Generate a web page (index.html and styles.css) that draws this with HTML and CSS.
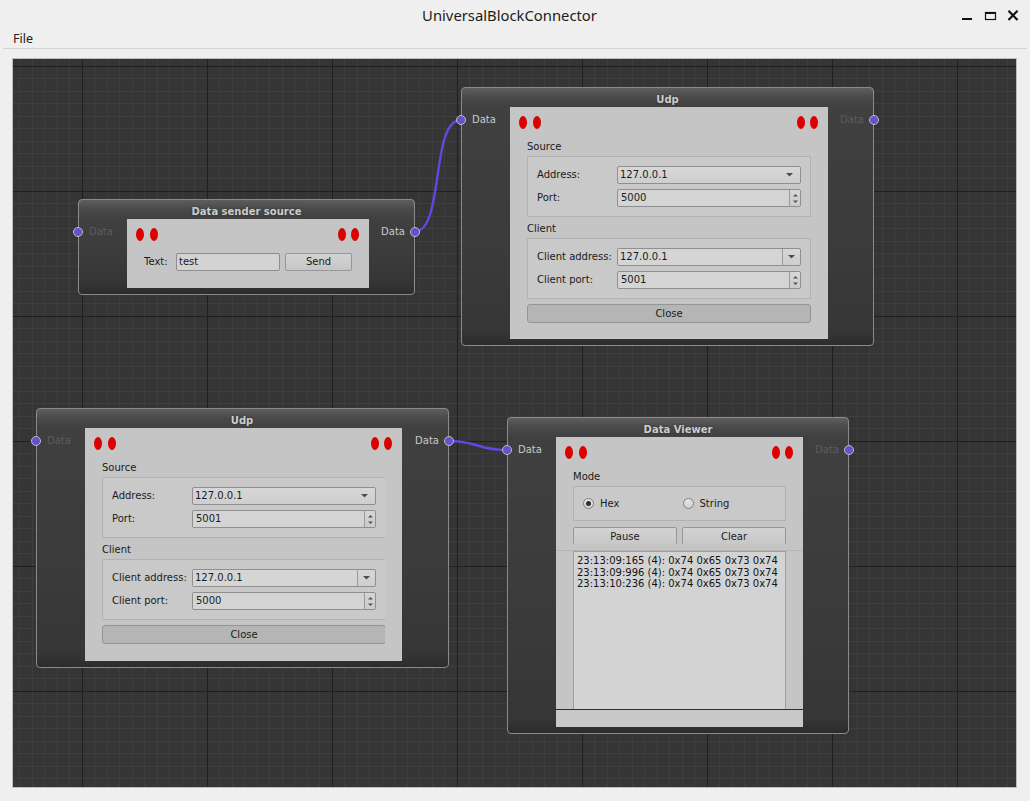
FILE: index.html
```html
<!DOCTYPE html>
<html>
<head>
<meta charset="utf-8">
<title>UniversalBlockConnector</title>
<link rel="stylesheet" href="styles.css">
</head>
<body>
<div class="window">
  <header class="titlebar">
    <span class="title">UniversalBlockConnector</span>
    <svg class="controls" width="57" height="11" viewBox="0 0 57 11">
      <rect x="0" y="8" width="10" height="2" fill="#111"/>
      <rect x="23.5" y="2.5" width="10" height="7" fill="none" stroke="#111" stroke-width="1.2"/>
      <rect x="23" y="2" width="11" height="2" fill="#111"/>
      <path d="M46.5 0.8 L55.5 10 M55.5 0.8 L46.5 10" stroke="#111" stroke-width="2.2"/>
    </svg>
  </header>
  <nav class="menubar"><span>File</span></nav>
  <div class="sep"></div>
  <main class="workspace">
    <div class="canvas">
      <svg class="layer" width="1003" height="728">
        <defs>
          <pattern id="grid" patternUnits="userSpaceOnUse" x="69" y="7" width="125" height="125">
            <rect width="125" height="125" fill="#353535"/>
            <g fill="#3e3e3e">
              <rect x="12" y="0" width="1" height="125"/>
              <rect x="25" y="0" width="1" height="125"/>
              <rect x="37" y="0" width="1" height="125"/>
              <rect x="50" y="0" width="1" height="125"/>
              <rect x="62" y="0" width="1" height="125"/>
              <rect x="75" y="0" width="1" height="125"/>
              <rect x="87" y="0" width="1" height="125"/>
              <rect x="100" y="0" width="1" height="125"/>
              <rect x="112" y="0" width="1" height="125"/>
              <rect y="12" x="0" height="1" width="125"/>
              <rect y="25" x="0" height="1" width="125"/>
              <rect y="37" x="0" height="1" width="125"/>
              <rect y="50" x="0" height="1" width="125"/>
              <rect y="62" x="0" height="1" width="125"/>
              <rect y="75" x="0" height="1" width="125"/>
              <rect y="87" x="0" height="1" width="125"/>
              <rect y="100" x="0" height="1" width="125"/>
              <rect y="112" x="0" height="1" width="125"/>
            </g>
            <g fill="#1f1f1f">
              <rect x="0" y="0" width="1" height="125"/>
              <rect x="0" y="0" width="125" height="1"/>
            </g>
          </pattern>
        </defs>
        <rect width="1003" height="728" fill="url(#grid)"/>
        <path class="wire" d="M401 173 C 432 173, 417 61, 448 61"/>
        <path class="wire" d="M435 382 C 466 382, 463 391, 494 391"/>
      </svg>

      <section class="node node-sender">
        <div class="node-title">Data sender source</div>
        <span class="port port-in"></span><span class="port-label label-in dim">Data</span>
        <span class="port port-out"></span><span class="port-label label-out">Data</span>
        <div class="panel panel-sender">
          <div class="leds"><span class="pair"><i class="led"></i><i class="led"></i></span><span class="pair"><i class="led"></i><i class="led"></i></span></div>
          <div class="sender-row">
            <span class="row-label">Text:</span>
            <span class="field">test</span>
            <span class="btn send">Send</span>
          </div>
        </div>
      </section>

      <section class="node node-udp-a">
        <div class="node-title">Udp</div>
        <span class="port port-in"></span><span class="port-label label-in">Data</span>
        <span class="port port-out"></span><span class="port-label label-out dim">Data</span>
        <div class="panel panel-udp-a">
          <div class="leds"><span class="pair"><i class="led"></i><i class="led"></i></span><span class="pair"><i class="led"></i><i class="led"></i></span></div>
          <div class="form">
            <div class="group-label">Source</div>
            <div class="group">
              <span>Address:</span>
              <div class="combo"><span>127.0.0.1</span><svg class="arrow" width="7" height="4" viewBox="0 0 7 4"><path d="M0 0H7L3.5 3.5Z"/></svg></div>
              <span>Port:</span>
              <div class="spin"><span class="val">5000</span><span class="spin-btns"><svg width="7" height="11" viewBox="0 0 7 11"><path d="M1 3.5L3.5 1L6 3.5Z M1 7.5L6 7.5L3.5 10Z"/></svg></span></div>
            </div>
            <div class="group-label">Client</div>
            <div class="group">
              <span>Client address:</span>
              <div class="combo editable"><span class="edit">127.0.0.1</span><span class="drop"><svg width="7" height="4" viewBox="0 0 7 4"><path d="M0 0H7L3.5 3.5Z"/></svg></span></div>
              <span>Client port:</span>
              <div class="spin"><span class="val">5001</span><span class="spin-btns"><svg width="7" height="11" viewBox="0 0 7 11"><path d="M1 3.5L3.5 1L6 3.5Z M1 7.5L6 7.5L3.5 10Z"/></svg></span></div>
            </div>
            <div class="btn close-btn">Close</div>
          </div>
        </div>
      </section>

      <section class="node node-udp-b">
        <div class="node-title">Udp</div>
        <span class="port port-in"></span><span class="port-label label-in dim">Data</span>
        <span class="port port-out"></span><span class="port-label label-out">Data</span>
        <div class="panel panel-udp-b">
          <div class="leds"><span class="pair"><i class="led"></i><i class="led"></i></span><span class="pair"><i class="led"></i><i class="led"></i></span></div>
          <div class="form">
            <div class="group-label">Source</div>
            <div class="group">
              <span>Address:</span>
              <div class="combo"><span>127.0.0.1</span><svg class="arrow" width="7" height="4" viewBox="0 0 7 4"><path d="M0 0H7L3.5 3.5Z"/></svg></div>
              <span>Port:</span>
              <div class="spin"><span class="val">5001</span><span class="spin-btns"><svg width="7" height="11" viewBox="0 0 7 11"><path d="M1 3.5L3.5 1L6 3.5Z M1 7.5L6 7.5L3.5 10Z"/></svg></span></div>
            </div>
            <div class="group-label">Client</div>
            <div class="group">
              <span>Client address:</span>
              <div class="combo editable"><span class="edit">127.0.0.1</span><span class="drop"><svg width="7" height="4" viewBox="0 0 7 4"><path d="M0 0H7L3.5 3.5Z"/></svg></span></div>
              <span>Client port:</span>
              <div class="spin"><span class="val">5000</span><span class="spin-btns"><svg width="7" height="11" viewBox="0 0 7 11"><path d="M1 3.5L3.5 1L6 3.5Z M1 7.5L6 7.5L3.5 10Z"/></svg></span></div>
            </div>
            <div class="btn close-btn">Close</div>
          </div>
        </div>
      </section>

      <section class="node node-viewer">
        <div class="node-title">Data Viewer</div>
        <span class="port port-in"></span><span class="port-label label-in">Data</span>
        <span class="port port-out"></span><span class="port-label label-out dim">Data</span>
        <div class="panel panel-viewer">
          <div class="leds"><span class="pair"><i class="led"></i><i class="led"></i></span><span class="pair"><i class="led"></i><i class="led"></i></span></div>
          <div class="viewer-top">
            <div class="group-label">Mode</div>
            <div class="mode-group">
              <label class="radio"><span class="radio-dot checked"></span>Hex</label>
              <label class="radio"><span class="radio-dot"></span>String</label>
            </div>
            <div class="viewer-buttons">
              <span class="btn">Pause</span>
              <span class="btn">Clear</span>
            </div>
          </div>
          <div class="splitter"></div>
          <div class="log-pane">
            <div class="log">
              <div>23:13:09:165 (4): 0x74 0x65 0x73 0x74</div>
              <div>23:13:09:996 (4): 0x74 0x65 0x73 0x74</div>
              <div>23:13:10:236 (4): 0x74 0x65 0x73 0x74</div>
            </div>
          </div>
          <div class="status"></div>
        </div>
      </section>
    </div>
  </main>
</div>
</body>
</html>
```

FILE: styles.css
```css
* { box-sizing: border-box; }
html, body { margin: 0; padding: 0; }
body {
  background: #efefef;
  font-family: "DejaVu Sans", "Liberation Sans", sans-serif;
  overflow: hidden;
}
.window {
  width: 1030px;
  height: 801px;
  display: flex;
  flex-direction: column;
}
.titlebar {
  height: 30px;
  display: grid;
  grid-template-columns: 1fr auto 1fr;
  align-items: center;
  padding-right: 11px;
}
.title {
  grid-column: 2;
  font-family: "Noto Sans", sans-serif;
  font-size: 14.8px;
  color: #1c1c1c;
  line-height: 30px;
}
.controls {
  grid-column: 3;
  justify-self: end;
  margin-top: 1px;
}
.menubar {
  height: 18px;
  padding-left: 13px;
  font-family: "Noto Sans", sans-serif;
  font-size: 12.5px;
  line-height: 18px;
  color: #202020;
}
.sep {
  height: 1px;
  background: #d3d3d3;
  margin: 0 3px;
}
.workspace {
  flex: 1;
  padding: 9px 13px 13px 12px;
}
.canvas {
  position: relative;
  width: 1005px;
  height: 730px;
  border: 1px solid #bcbcbc;
  overflow: hidden;
  background: #353535;
}
.layer {
  position: absolute;
  left: 0;
  top: 0;
}
.wire {
  fill: none;
  stroke: #5c4be3;
  stroke-width: 2.4;
}

/* nodes */
.node {
  position: absolute;
  display: flex;
  flex-direction: column;
  align-items: flex-start;
  border: 1px solid #8a8a8a;
  border-radius: 4px;
  padding: 0 45px 6px 48px;
  background: linear-gradient(to bottom, #5e5e5e 0px, #4a4a4a 9px, #404040 19px, #3b3b3b 60%, #363636 calc(100% - 14px), #2c2c2c 100%);
}
.node-sender { left: 65px; top: 140px; }
.node-udp-a { left: 448px; top: 28px; }
.node-udp-b { left: 23px; top: 349px; padding-right: 46px; }
.node-viewer { left: 494px; top: 358px; }

.node-title {
  align-self: stretch;
  height: 19px;
  margin: 0 -45px 0 -48px;
  padding-top: 6px;
  line-height: 12px;
  font-size: 10px;
  font-weight: bold;
  color: #cdcdcd;
  text-align: center;
  text-shadow: 0 0 2px #2a2a2a;
}
.port {
  position: absolute;
  top: 27px;
  width: 10px;
  height: 10px;
  border-radius: 50%;
  background: #6452cb;
  border: 1px solid #bdbdbd;
  z-index: 2;
}
.port-in { left: -6px; }
.port-out { right: -6px; }
.port-label {
  position: absolute;
  top: 26px;
  font-size: 10px;
  line-height: 12px;
  color: #c9c9c9;
}
.port-label.dim { color: #5d5d5d; }
.label-in { left: 10px; }
.label-out { right: 9px; }

/* inner widget panel */
.panel {
  background: #c5c5c5;
  display: flex;
  flex-direction: column;
  padding-top: 9px;
  color: #1b1b1b;
  font-size: 10px;
  line-height: 12px;
}
.panel-sender { width: 242px; height: 69px; }
.panel-udp-a { width: 318px; height: 232px; }
.panel-udp-b { width: 317px; height: 233px; }
.panel-viewer { width: 247px; height: 290px; }

.leds {
  display: flex;
  justify-content: space-between;
  height: 13px;
  padding: 0 10px 0 9px;
  flex-shrink: 0;
}
.pair { display: flex; gap: 5.5px; }
.led {
  display: block;
  width: 8px;
  height: 13px;
  border-radius: 50%;
  background: #dc0000;
}

/* controls */
.btn {
  display: flex;
  align-items: center;
  justify-content: center;
  border: 1px solid #979797;
  border-radius: 2px;
  background: linear-gradient(to bottom, #d3d3d3, #c6c6c6);
  color: #1b1b1b;
}
.field {
  display: flex;
  align-items: center;
  height: 18px;
  border: 1px solid #8e8e8e;
  border-radius: 2px;
  background: #d3d3d3;
  padding-left: 2px;
}
.sender-row {
  display: flex;
  align-items: center;
  margin: 12px 17px 0;
  height: 18px;
}
.row-label { width: 32px; }
.sender-row .field { width: 104px; }
.sender-row .send { width: 67px; height: 18px; margin-left: 5px; }

.form {
  display: flex;
  flex-direction: column;
  align-items: flex-start;
  margin: 11px 17px 0;
  overflow: hidden;
}
.group-label {
  height: 14px;
  line-height: 14px;
  margin-bottom: 2px;
}
.group {
  width: 284px;
  flex-shrink: 0;
  border: 1px solid #b2b2b2;
  background: #c9c9c9;
  padding: 9px;
  display: grid;
  grid-template-columns: 80px 184px;
  row-gap: 5px;
  align-items: center;
}
.group + .group-label { margin-top: 5px; }
.close-btn {
  width: 284px;
  flex-shrink: 0;
  height: 19px;
  margin-top: 5px;
  background: #b5b5b5;
  border-color: #959595;
  border-radius: 3px;
}
.combo, .spin {
  display: flex;
  align-items: center;
  height: 18px;
  border: 1px solid #8f8f8f;
  border-radius: 2px;
  background: linear-gradient(to bottom, #d7d7d7, #cecece);
  padding-left: 2px;
  overflow: hidden;
}
.combo .arrow { margin-left: auto; margin-right: 7px; fill: #4d4d4d; }
.combo.editable { padding-left: 0; }
.combo .edit {
  flex: 1;
  height: 100%;
  display: flex;
  align-items: center;
  padding-left: 2px;
  background: #d5d5d5;
  border-right: 1px solid #9a9a9a;
}
.combo .drop {
  width: 17px;
  height: 100%;
  display: flex;
  align-items: center;
  justify-content: center;
}
.combo .drop svg { fill: #4d4d4d; }
.spin { background: #d4d4d4; }
.spin .val { flex: 1; padding-left: 1px; }
.spin-btns {
  width: 11px;
  height: 100%;
  border-left: 1px solid #9a9a9a;
  display: flex;
  align-items: center;
  justify-content: center;
  background: linear-gradient(to bottom, #d6d6d6, #cbcbcb);
}
.spin-btns svg { fill: #525252; }

/* viewer */
.viewer-top {
  height: 85px;
  flex-shrink: 0;
  overflow: hidden;
  padding: 11px 17px 0;
}
.mode-group {
  height: 35px;
  border: 1px solid #b2b2b2;
  background: #c9c9c9;
  display: grid;
  grid-template-columns: 1fr 1fr;
  column-gap: 6px;
  padding: 0 9px;
  align-items: center;
}
.radio {
  display: flex;
  align-items: center;
  gap: 6px;
}
.radio-dot {
  position: relative;
  width: 11px;
  height: 11px;
  border-radius: 50%;
  border: 1px solid #7f7f7f;
  background: linear-gradient(to bottom, #e6e6e6, #d2d2d2);
}
.radio-dot.checked::after {
  content: "";
  position: absolute;
  left: 2px;
  top: 2px;
  width: 5px;
  height: 5px;
  border-radius: 50%;
  background: #2d2d2d;
}
.viewer-buttons {
  display: grid;
  grid-template-columns: 1fr 1fr;
  column-gap: 5px;
  margin-top: 6px;
}
.viewer-buttons .btn { height: 20px; }
.splitter { height: 6px; flex-shrink: 0; }
.log-pane {
  height: 159px;
  flex-shrink: 0;
  border-top: 1px solid #b5b5b5;
  padding: 0 17px;
}
.log {
  height: 100%;
  border: 1px solid #9e9e9e;
  border-bottom: none;
  background: #d3d3d3;
  padding: 3px 3px 0;
  line-height: 11.5px;
  color: #141414;
  white-space: nowrap;
}
.status {
  flex: 1;
  border-top: 1px solid #2e2e2e;
  background: #c8c8c8;
}
```
